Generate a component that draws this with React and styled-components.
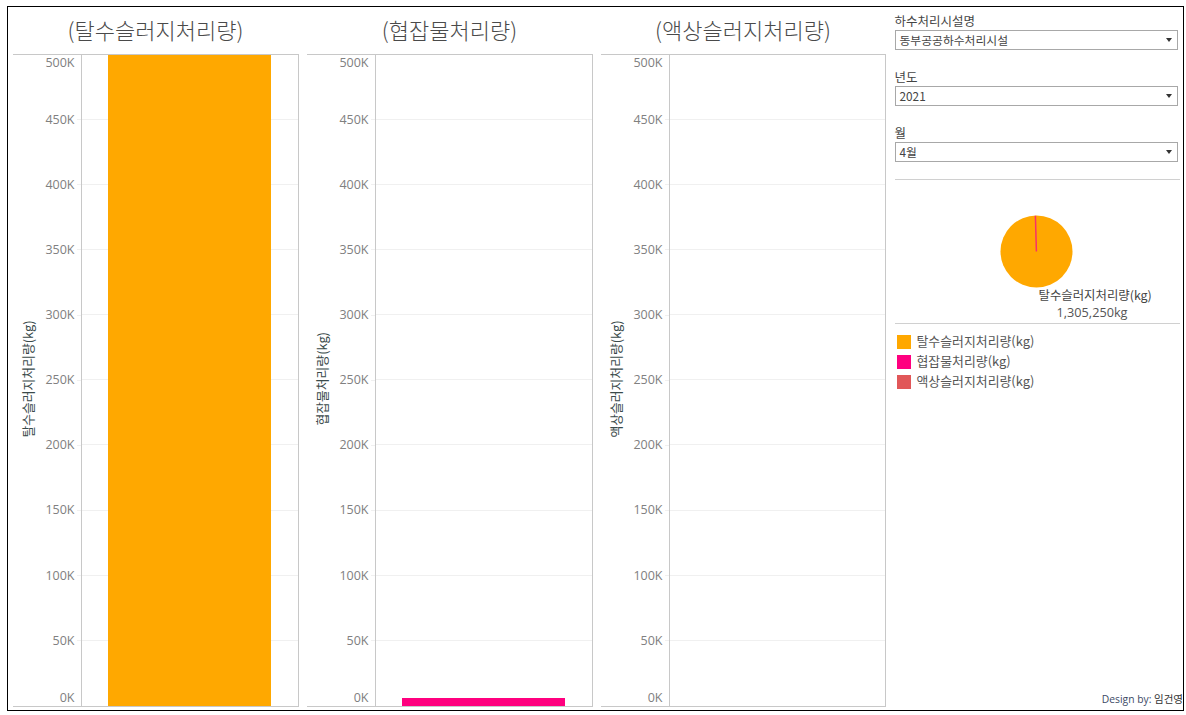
import React from "react";
import styled, { createGlobalStyle } from "styled-components";

const KR = `"Noto Sans CJK KR", "Open Sans", sans-serif`;
const LATIN = `"Open Sans", "Noto Sans CJK KR", sans-serif`;

const Global = createGlobalStyle`
  html, body { margin: 0; padding: 0; background: #fff; }
  body { font-family: ${KR}; color: #333; }
`;

const Frame = styled.div`
  box-sizing: border-box;
  width: 1177px;
  height: 705px;
  margin: 6px 0 0 7px;
  border: 1.5px solid #000;
  padding: 0 4px 3px 4.5px;
  display: flex;
  gap: 8px;
  overflow: hidden;
`;

const Panel = styled.section`
  width: ${(p) => p.$width}px;
  flex: none;
  display: flex;
  flex-direction: column;
`;

const Title = styled.h2`
  height: 46.5px;
  margin: 0;
  padding-bottom: 3px;
  box-sizing: border-box;
  display: flex;
  align-items: center;
  justify-content: center;
  font: 300 22px/1 ${KR};
  color: #4a4a4a;
`;

const ChartBody = styled.div`
  flex: 1;
  display: grid;
  grid-template-columns: 69px 1fr;
  border-top: 1px solid #c8c8c8;
  border-right: 1px solid #c8c8c8;
  border-bottom: 1px solid #c8c8c8;
`;

const AxisArea = styled.div`
  display: flex;
  border-right: 1px solid #c8c8c8;
`;

const AxisTitle = styled.div`
  width: 30px;
  flex: none;
  box-sizing: border-box;
  padding-top: 4px;
  display: flex;
  align-items: center;
  justify-content: center;
  writing-mode: vertical-rl;
  text-orientation: sideways;
  transform: rotate(180deg);
  font: 400 12.8px/1 ${KR};
  color: #3a4a4a;
  white-space: nowrap;
`;

const Ticks = styled.div`
  flex: 1;
  display: flex;
  flex-direction: column;
  justify-content: space-between;
`;

const Tick = styled.div`
  height: 0;
  display: flex;
  justify-content: flex-end;
  align-items: ${(p) => p.$align};
  gap: 2px;
  font: 400 12.5px/16px ${LATIN};
  color: #808080;
  padding-right: ${(p) => (p.$align === "center" ? 0 : 6)}px;
  &::after {
    content: "";
    display: ${(p) => (p.$align === "center" ? "block" : "none")};
    width: 4px;
    height: 1px;
    background: #f0f0f0;
  }
`;

const Plot = styled.div`
  position: relative;
  display: flex;
  flex-direction: column;
`;

const GridRow = styled.div`
  flex: 1;
  box-sizing: border-box;
  border-bottom: 1px solid ${(p) => (p.$last ? "transparent" : "#f0f0f0")};
`;

const Bar = styled.div`
  position: absolute;
  left: 26px;
  bottom: 0;
  width: 163px;
  height: ${(p) => p.$height};
  background: ${(p) => p.$color};
`;

const Sidebar = styled.aside`
  flex: 1;
  min-width: 0;
  display: flex;
  flex-direction: column;
  margin-left: 1px;
  margin-right: -1px;
`;

const Filters = styled.div`
  padding-top: 5px;
  height: 173px;
  box-sizing: border-box;
  border-bottom: 1px solid #d0d0d0;
  display: flex;
  flex-direction: column;
  gap: 17px;
`;

const Filter = styled.div`
  display: flex;
  flex-direction: column;
  height: 39px;
`;

const FilterLabel = styled.div`
  font: 400 12.5px/17px ${KR};
  color: #444;
  margin-bottom: 1px;
`;

const Select = styled.div`
  box-sizing: border-box;
  height: 20px;
  margin: 0 2px 0 0;
  padding: 0 5px 1px 4px;
  border: 1px solid #a8a8a8;
  display: flex;
  align-items: center;
  justify-content: space-between;
  font: 400 11.8px/1 ${KR};
  color: #444;
`;

const Caret = styled.span`
  width: 0;
  height: 0;
  border-left: 3px solid transparent;
  border-right: 3px solid transparent;
  border-top: 4px solid #333;
`;

const PieArea = styled.div`
  height: 144px;
  box-sizing: border-box;
  border-bottom: 1px solid #d0d0d0;
  display: flex;
  flex-direction: column;
  padding-top: 35px;
`;

const PieSvg = styled.svg`
  display: block;
  width: 73px;
  height: 73px;
  margin-left: 105.5px;
  flex: none;
`;

const PieCaption = styled.div`
  margin-left: 144px;
  width: 112px;
  text-align: center;
  font: 400 12.4px/19px ${KR};
  color: #444;
  white-space: nowrap;
  margin-top: -2px;
`;

const PieValue = styled.div`
  color: #555;
  font: 400 12.7px/19px ${LATIN};
  margin-top: -2px;
  margin-left: -5px;
`;

const Legend = styled.ul`
  list-style: none;
  margin: 0;
  padding: 11px 0 0 2px;
  display: flex;
  flex-direction: column;
  gap: 6px;
`;

const LegendItem = styled.li`
  display: flex;
  align-items: center;
  gap: 6px;
  height: 14px;
  font: 400 12.9px/14px ${KR};
  color: #555;
`;

const LegendText = styled.span`
  margin-top: -2px;
`;

const Swatch = styled.span`
  width: 14px;
  height: 14px;
  flex: none;
  background: ${(p) => p.$color};
`;

const Credit = styled.div`
  margin-top: auto;
  margin-right: -3px;
  margin-bottom: 1.5px;
  text-align: right;
  font: 400 10.3px/13px ${LATIN};
  color: #3c4a66;
  white-space: nowrap;
`;

const Who = styled.span`
  font: 400 10.5px/13px ${KR};
  color: #333;
`;

const TICKS = ["500K", "450K", "400K", "350K", "300K", "250K", "200K", "150K", "100K", "50K", "0K"];

const CHARTS = [
  { name: "탈수슬러지처리량", width: 286, bar: { height: "100%", color: "#ffa800" } },
  { name: "협잡물처리량", width: 286, bar: { height: "8px", color: "#ff007f" } },
  { name: "액상슬러지처리량", width: 285, bar: null },
];

const FILTERS = [
  { label: "하수처리시설명", value: "동부공공하수처리시설" },
  { label: "년도", value: "2021" },
  { label: "월", value: "4월" },
];

const LEGEND = [
  { label: "탈수슬러지처리량(kg)", color: "#ffa800" },
  { label: "협잡물처리량(kg)", color: "#ff007f" },
  { label: "액상슬러지처리량(kg)", color: "#e15759" },
];

function Chart({ name, width, bar }) {
  return (
    <Panel $width={width}>
      <Title>({name})</Title>
      <ChartBody>
        <AxisArea>
          <AxisTitle>{name}(kg)</AxisTitle>
          <Ticks>
            {TICKS.map((t, i) => (
              <Tick key={t} $align={i === 0 ? "flex-start" : i === TICKS.length - 1 ? "flex-end" : "center"}>
                {t}
              </Tick>
            ))}
          </Ticks>
        </AxisArea>
        <Plot>
          {TICKS.slice(1).map((t, i) => (
            <GridRow key={t} $last={i === TICKS.length - 2} />
          ))}
          {bar && <Bar $height={bar.height} $color={bar.color} />}
        </Plot>
      </ChartBody>
    </Panel>
  );
}

export default function App() {
  return (
    <>
      <Global />
      <Frame>
        {CHARTS.map((c) => (
          <Chart key={c.name} {...c} />
        ))}
        <Sidebar>
          <Filters>
            {FILTERS.map((f) => (
              <Filter key={f.label}>
                <FilterLabel>{f.label}</FilterLabel>
                <Select>
                  {f.value}
                  <Caret />
                </Select>
              </Filter>
            ))}
          </Filters>
          <PieArea>
            <PieSvg viewBox="0 0 73 73">
              <circle cx="36.5" cy="36.5" r="36" fill="#ffa800" />
              <line x1="36.4" y1="36.5" x2="35.4" y2="0.7" stroke="#f8306a" strokeWidth="1.5" />
            </PieSvg>
            <PieCaption>
              탈수슬러지처리량(kg)
              <PieValue>1,305,250kg</PieValue>
            </PieCaption>
          </PieArea>
          <Legend>
            {LEGEND.map((l) => (
              <LegendItem key={l.label}>
                <Swatch $color={l.color} />
                <LegendText>{l.label}</LegendText>
              </LegendItem>
            ))}
          </Legend>
          <Credit>
            Design by: <Who>임건영</Who>
          </Credit>
        </Sidebar>
      </Frame>
    </>
  );
}
